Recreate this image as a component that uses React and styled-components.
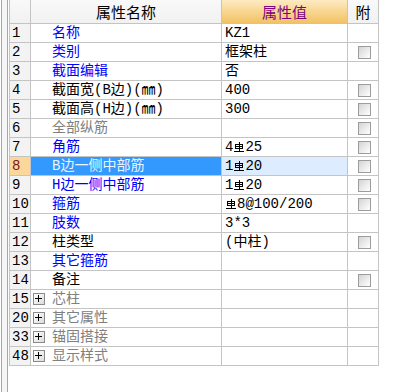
import React from "react";
import styled, { createGlobalStyle, css } from "styled-components";

const GlobalStyle = createGlobalStyle`
  html, body { margin: 0; padding: 0; background: #ffffff; }
  body {
    font-family: "Liberation Mono", "Noto Sans CJK SC", monospace;
    font-size: 14px;
    color: #000;
  }
`;

const Page = styled.div`
  display: flex;
  align-items: flex-start;
  height: 392px;
  overflow: hidden;
`;

const Splitter = styled.div`
  width: 5px;
  height: 392px;
  margin-left: 1px;
  margin-right: 1px;
  border-left: 1px solid #a8a8a8;
  border-right: 1px solid #a8a8a8;
  background: #f6f6f6;
  flex: none;
`;

const Grid = styled.div`
  display: grid;
  grid-template-columns: 21px 191px 126px 31px;
  border-left: 1px solid #c4c4c4;
  flex: none;
`;

const cellBase = css`
  box-sizing: border-box;
  border-right: 1px solid #c4c4c4;
  border-bottom: 1px solid #c4c4c4;
  display: flex;
  align-items: center;
  white-space: nowrap;
  overflow: hidden;
  line-height: 14px;
`;

const Text = styled.span`
  display: block;
  line-height: 14px;
  height: 14px;
`;

const HeadCell = styled.div`
  ${cellBase};
  height: 24px;
  justify-content: center;
  font-family: "Noto Sans CJK SC", sans-serif;
  font-size: 15px;
  background: ${(p) =>
    p.$accent
      ? "linear-gradient(to bottom, #fdeac4 0%, #f8d690 50%, #f1c263 100%)"
      : "linear-gradient(to bottom, #f9f9f9, #f1f1f1)"};
  color: ${(p) => (p.$accent ? "#800080" : "#000")};
`;

const NumCell = styled.div`
  ${cellBase};
  height: 19px;
  padding-left: 2px;
  font-size: 14px;
  background: ${(p) => (p.$selected ? "#fcd79c" : "#f3f3f3")};
  color: ${(p) => (p.$selected ? "#7a1a1a" : "#000")};
`;

const toneColor = {
  blue: "#0000ff",
  black: "#000000",
  gray: "#808080",
};

const NameCell = styled.div`
  ${cellBase};
  height: 19px;
  padding-left: ${(p) => (p.$group ? "2px" : "21px")};
  gap: 7px;
  background: ${(p) => (p.$selected ? "#3399ff" : "#ffffff")};
  color: ${(p) => (p.$selected ? "#eaf4ff" : toneColor[p.$tone])};
`;

const ValueCell = styled.div`
  ${cellBase};
  height: 19px;
  padding-left: 3px;
  background: ${(p) => (p.$selected ? "#ddecff" : "#ffffff")};
`;

const AttachCell = styled.div`
  ${cellBase};
  height: 19px;
  justify-content: center;
  padding-left: 2px;
  background: #ffffff;
`;

const CheckBox = styled.span`
  box-sizing: border-box;
  width: 13px;
  height: 13px;
  border: 1px solid #9c9c9c;
  background: linear-gradient(135deg, #d4d4d4 0%, #ececec 55%, #ffffff 100%);
`;

const Expander = styled.span`
  box-sizing: border-box;
  width: 12px;
  height: 12px;
  border: 1px solid #8a8a8a;
  background: linear-gradient(135deg, #ffffff, #dcdcdc);
  display: flex;
  align-items: center;
  justify-content: center;
  flex: none;
`;

const Rebar = () => (
  <svg width="10" height="13" viewBox="0 0 10 13" style={{ margin: "0 1px" }}>
    <g fill="none" stroke="#000" strokeWidth="1" shapeRendering="crispEdges">
      <rect x="1.5" y="3.5" width="7" height="4" />
      <line x1="5" y1="1" x2="5" y2="11" />
      <line x1="1.5" y1="5.5" x2="8.5" y2="5.5" />
      <line x1="0" y1="10.5" x2="10" y2="10.5" />
    </g>
  </svg>
);

const S = "§";

const renderValue = (v) => {
  if (!v) return null;
  const parts = v.split(S);
  const out = [];
  parts.forEach((p, i) => {
    if (i > 0) out.push(<Rebar key={"r" + i} />);
    if (p) out.push(<Text key={"t" + i}>{p}</Text>);
  });
  return out;
};

const rows = [
  { n: 1, name: "名称", tone: "blue", v: "KZ1", cb: false },
  { n: 2, name: "类别", tone: "blue", v: "框架柱", cb: true },
  { n: 3, name: "截面编辑", tone: "blue", v: "否", cb: false },
  { n: 4, name: "截面宽(B边)(㎜)", tone: "black", v: "400", cb: true },
  { n: 5, name: "截面高(H边)(㎜)", tone: "black", v: "300", cb: true },
  { n: 6, name: "全部纵筋", tone: "gray", v: "", cb: true },
  { n: 7, name: "角筋", tone: "blue", v: `4${S}25`, cb: true },
  { n: 8, name: "B边一侧中部筋", tone: "blue", v: `1${S}20`, cb: true, sel: true },
  { n: 9, name: "H边一侧中部筋", tone: "blue", v: `1${S}20`, cb: true },
  { n: 10, name: "箍筋", tone: "blue", v: `${S}8@100/200`, cb: true },
  { n: 11, name: "肢数", tone: "blue", v: "3*3", cb: false },
  { n: 12, name: "柱类型", tone: "black", v: "(中柱)", cb: true },
  { n: 13, name: "其它箍筋", tone: "blue", v: "", cb: false },
  { n: 14, name: "备注", tone: "black", v: "", cb: true },
  { n: 15, name: "芯柱", tone: "gray", group: true },
  { n: 20, name: "其它属性", tone: "gray", group: true },
  { n: 33, name: "锚固搭接", tone: "gray", group: true },
  { n: 48, name: "显示样式", tone: "gray", group: true },
];

const Plus = () => (
  <svg width="8" height="8" viewBox="0 0 8 8">
    <path d="M0 3.5H7M3.5 0V7" stroke="#000" strokeWidth="1" shapeRendering="crispEdges" />
  </svg>
);

export default function App() {
  return (
    <>
      <GlobalStyle />
      <Page>
        <Splitter />
        <Grid>
          <HeadCell />
          <HeadCell>
            <Text>属性名称</Text>
          </HeadCell>
          <HeadCell $accent>
            <Text>属性值</Text>
          </HeadCell>
          <HeadCell>
            <Text>附</Text>
          </HeadCell>
          {rows.map((r) => (
            <React.Fragment key={r.n}>
              <NumCell $selected={r.sel}>
                <Text>{r.n}</Text>
              </NumCell>
              <NameCell $tone={r.tone} $selected={r.sel} $group={r.group}>
                {r.group && (
                  <Expander>
                    <Plus />
                  </Expander>
                )}
                <Text>{r.name}</Text>
              </NameCell>
              <ValueCell $selected={r.sel}>{renderValue(r.v)}</ValueCell>
              <AttachCell>{r.cb && <CheckBox />}</AttachCell>
            </React.Fragment>
          ))}
        </Grid>
      </Page>
    </>
  );
}
